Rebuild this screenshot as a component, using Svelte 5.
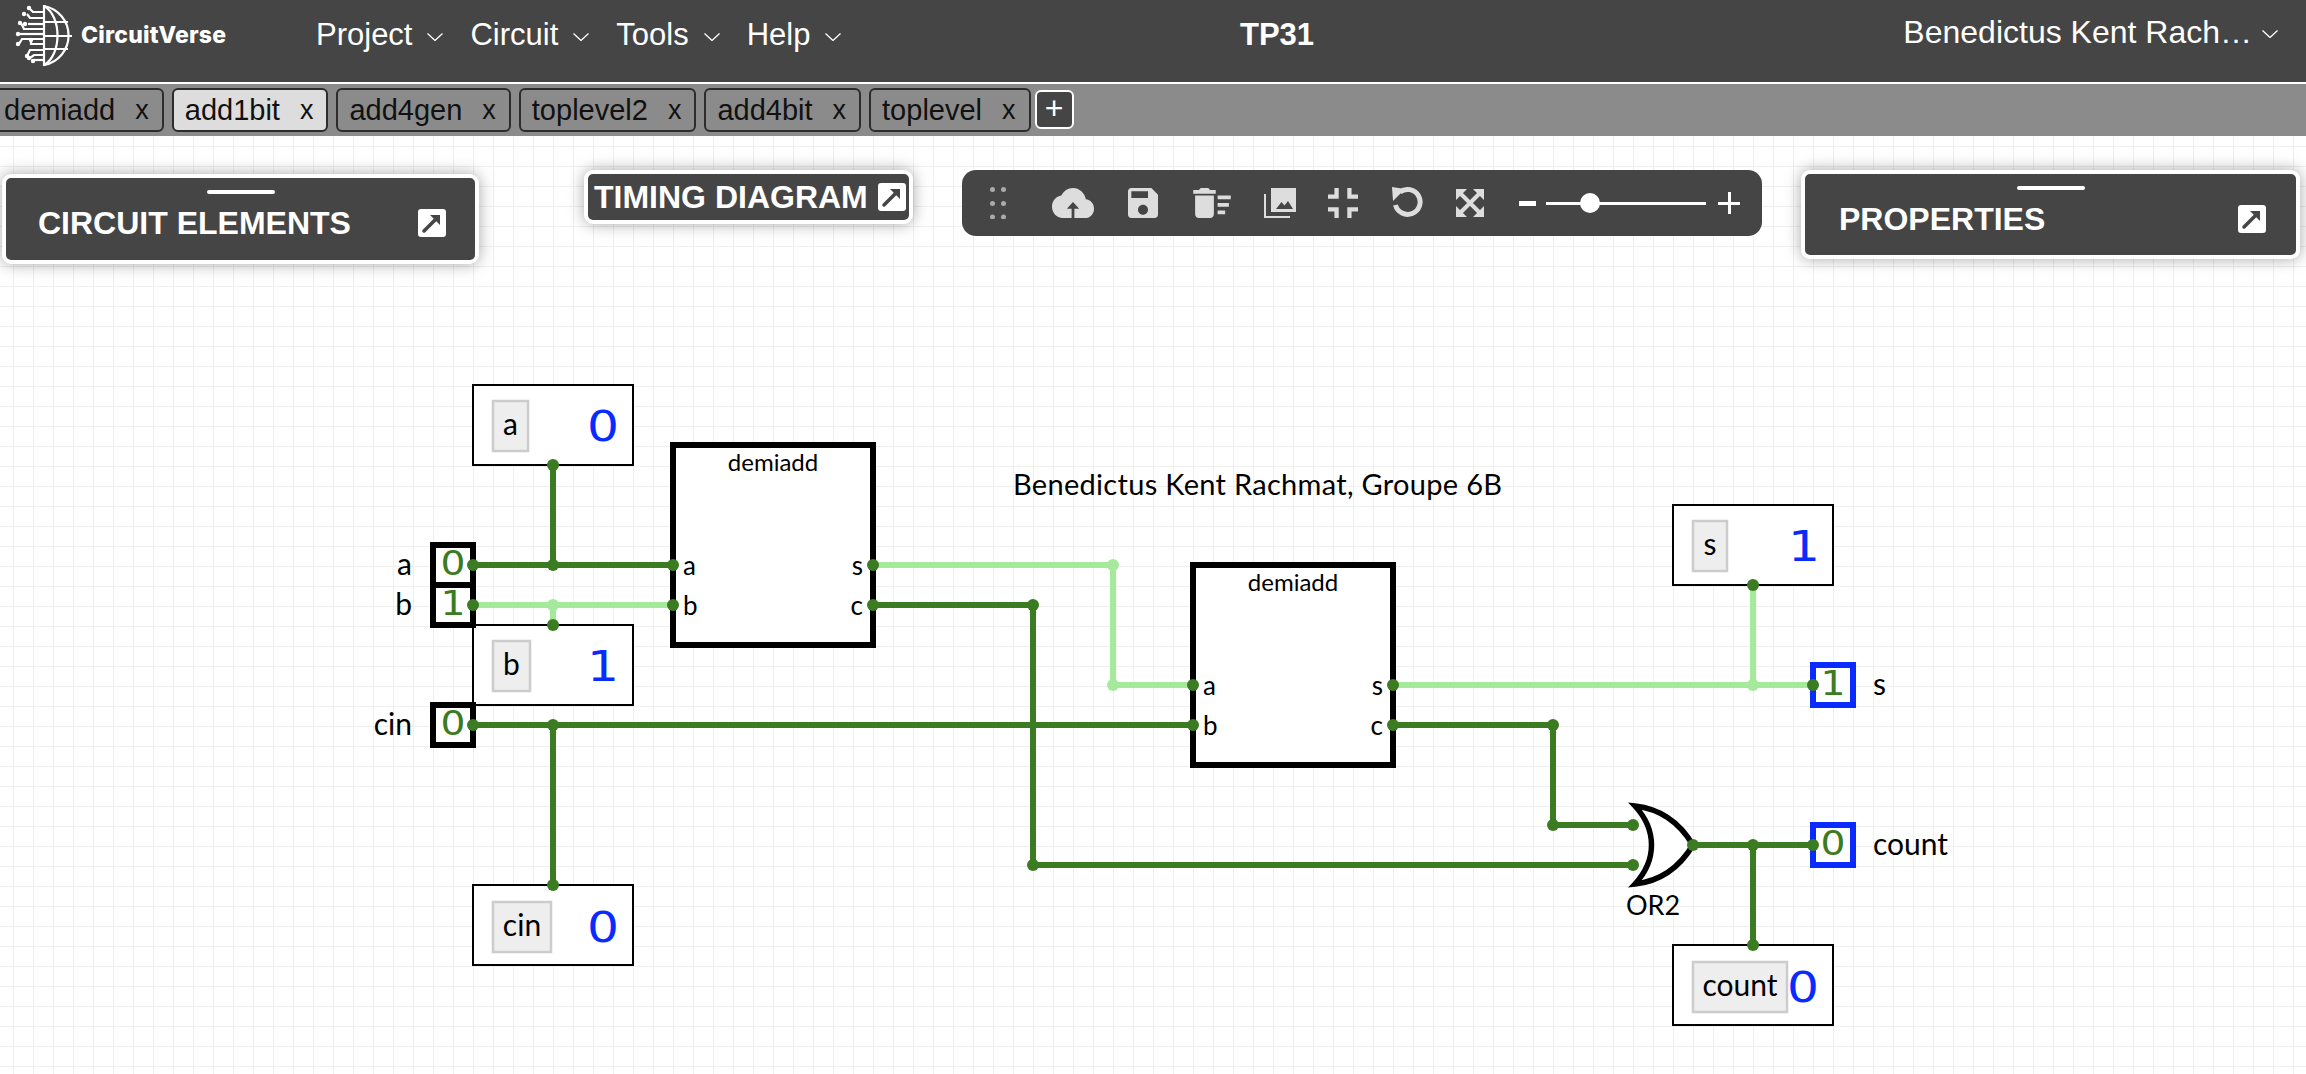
<script lang="ts">
  const NAV = ['Project', 'Circuit', 'Tools', 'Help'];
  const TABS = ['demiadd', 'add1bit', 'add4gen', 'toplevel2', 'add4bit', 'toplevel'];
  const ACTIVE_TAB = 'add1bit';

  const DARK = '#3b7c23';
  const LIGHT = '#a5ea9b';

  // wires: list of polylines in page coordinates
  const wires = [
    { c: DARK, p: '473,565 673,565' },
    { c: DARK, p: '553,465 553,565' },
    { c: LIGHT, p: '473,605 673,605' },
    { c: LIGHT, p: '553,605 553,625' },
    { c: DARK, p: '473,725 1193,725' },
    { c: DARK, p: '553,725 553,885' },
    { c: LIGHT, p: '873,565 1113,565 1113,685 1193,685' },
    { c: DARK, p: '873,605 1033,605 1033,865 1633,865' },
    { c: DARK, p: '1393,725 1553,725 1553,825 1633,825' },
    { c: LIGHT, p: '1393,685 1813,685' },
    { c: LIGHT, p: '1753,685 1753,585' },
    { c: DARK, p: '1693,845 1813,845' },
    { c: DARK, p: '1753,845 1753,945' },
  ];

  const nodes = [
    [473, 565, DARK], [473, 605, DARK], [473, 725, DARK],
    [553, 465, DARK], [553, 565, DARK], [553, 605, LIGHT], [553, 625, DARK],
    [553, 725, DARK], [553, 885, DARK],
    [673, 565, DARK], [673, 605, DARK], [873, 565, DARK], [873, 605, DARK],
    [1113, 565, LIGHT], [1113, 685, LIGHT], [1033, 605, DARK], [1033, 865, DARK],
    [1193, 685, DARK], [1193, 725, DARK], [1393, 685, DARK], [1393, 725, DARK],
    [1553, 725, DARK], [1553, 825, DARK], [1633, 825, DARK], [1633, 865, DARK],
    [1693, 845, DARK], [1753, 685, LIGHT], [1753, 585, DARK], [1753, 845, DARK],
    [1753, 945, DARK], [1813, 685, DARK], [1813, 845, DARK],
  ] as [number, number, string][];

  // probes on the canvas: the boxed labels with a blue value
  const probes = [
    { x: 473, y: 385, chipX: 492, chipW: 37, text: 'a', value: '0', vx: 603, base: 434 },
    { x: 473, y: 625, chipX: 492, chipW: 39, text: 'b', value: '1', vx: 603, base: 674 },
    { x: 473, y: 885, chipX: 492, chipW: 60, text: 'cin', value: '0', vx: 603, base: 935 },
    { x: 1673, y: 505, chipX: 1692, chipW: 36, text: 's', value: '1', vx: 1804, base: 554 },
    { x: 1673, y: 945, chipX: 1692, chipW: 96, text: 'count', value: '0', vx: 1803, base: 995 },
  ];

  const inputs = [
    { y: 545, name: 'a', value: '0' },
    { y: 585, name: 'b', value: '1' },
    { y: 705, name: 'cin', value: '0' },
  ];

  const outputs = [
    { y: 665, name: 's', value: '1' },
    { y: 825, name: 'count', value: '0' },
  ];

  const subcircuits = [
    { x: 673, y: 445 },
    { x: 1193, y: 565 },
  ];

  // logo circuit traces, in page pixels
  const traces = [
    'M44 12H33L29 8', 'M44 18H30L27 14', 'M44 24H28', 'M44 29H24L21 23', 'M44 34H19',
    'M44 39H22L19 44', 'M44 44H31V40', 'M44 50H30L27 56', 'M44 55H34L30 58', 'M44 60H34',
  ];
  const traceDots = [
    [29, 8], [24, 14], [25, 24], [20, 23], [18, 34], [18, 44], [31, 40], [27, 56], [29, 58], [33, 61],
  ];
</script>

{#snippet launch()}
  <svg class="launch" viewBox="0 0 28 28">
    <rect width="28" height="28" rx="3" fill="#fff" />
    <path d="M6 22L19 9" fill="none" stroke="#454545" stroke-width="3.5" stroke-linecap="round" />
    <path d="M12 6H22V16Z" fill="#454545" />
  </svg>
{/snippet}

{#snippet chevron()}
  <svg class="chevron" viewBox="0 0 16 8"><path d="M0.5 0.5L8 7.5L15.5 0.5" fill="none" stroke="#fff" stroke-width="1.3" /></svg>
{/snippet}

<div class="page">
  <header class="navbar">
    <div class="logo">
      <svg class="globe" viewBox="0 0 76 70" fill="none" stroke="#fff" stroke-width="2.2">
        <path d="M44 6A30 30 0 0 1 44 65" />
        <path d="M44 6C62 16 62 55 44 65" />
        <path d="M44 5V66M44 22H68M44 36H72M44 49H68" />
        {#each traces as t}<path d={t} />{/each}
        {#each traceDots as d}<circle cx={d[0]} cy={d[1]} r="2.2" fill="#fff" stroke="none" />{/each}
      </svg>
      <span class="brand">CircuitVerse</span>
    </div>
    <nav class="menu">
      {#each NAV as item}
        <span class="menu-item">{item}{@render chevron()}</span>
      {/each}
    </nav>
    <div class="project">TP31</div>
    <div class="user">Benedictus Kent Rach…{@render chevron()}</div>
  </header>

  <div class="tabs">
    {#each TABS as tab}
      <div class="tab" class:active={tab === ACTIVE_TAB}><span>{tab}</span><span class="close">x</span></div>
    {/each}
    <div class="add-tab">+</div>
  </div>

  <main class="canvas">
    <svg class="circuit" viewBox="0 136 2306 938">
      {#each wires as w}
        <polyline points={w.p} fill="none" stroke={w.c} stroke-width="6" />
      {/each}

      {#each subcircuits as s}
        <rect x={s.x} y={s.y} width="200" height="200" fill="#fff" stroke="#000" stroke-width="6" />
        <text class="ral sub-title" x={s.x + 100} y={s.y + 26} text-anchor="middle">demiadd</text>
        <text class="ral pin" x={s.x + 10} y={s.y + 130}>a</text>
        <text class="ral pin" x={s.x + 10} y={s.y + 170}>b</text>
        <text class="ral pin" x={s.x + 190} y={s.y + 130} text-anchor="end">s</text>
        <text class="ral pin" x={s.x + 190} y={s.y + 170} text-anchor="end">c</text>
      {/each}
      <path d="M1635 806C1662 809 1681 825 1693 845C1681 865 1662 881 1635 884C1657 860 1657 830 1635 806Z" fill="#fff" stroke="#000" stroke-width="5.5" />
      <text class="ral or" x="1626" y="915">OR2</text>

      {#each probes as p}
        <rect x={p.x} y={p.y} width="160" height="80" fill="#fff" stroke="#000" stroke-width="2" />
        <rect x={p.chipX + 1} y={p.base - 33} width={p.chipW - 2} height="50" fill="#eee" stroke="#ccc" stroke-width="2.5" />
        <text class="ral big" x={p.chipX + p.chipW / 2} y={p.base + 1} text-anchor="middle">{p.text}</text>
        <text class="digit blue" x={p.vx} y={p.base + 7} text-anchor="middle" textLength="32" lengthAdjust="spacingAndGlyphs">{p.value}</text>
      {/each}

      {#each inputs as i}
        <rect x="433" y={i.y} width="40" height="40" fill="#fff" stroke="#000" stroke-width="6" />
        <text class="ral big" x="412" y={i.y + 30} text-anchor="end">{i.name}</text>
        <text class="digit green" x="453" y={i.y + 30} text-anchor="middle" textLength="25" lengthAdjust="spacingAndGlyphs">{i.value}</text>
      {/each}

      {#each outputs as o}
        <rect x="1813" y={o.y} width="40" height="40" fill="#fff" stroke="#0a2bff" stroke-width="6" />
        <text class="ral big" x="1873" y={o.y + 30}>{o.name}</text>
        <text class="digit green" x="1833" y={o.y + 30} text-anchor="middle" textLength="25" lengthAdjust="spacingAndGlyphs">{o.value}</text>
      {/each}

      {#each nodes as n}
        <circle cx={n[0]} cy={n[1]} r="6" fill={n[2]} />
      {/each}

      <text class="ral note" x="1013" y="495">Benedictus Kent Rachmat, Groupe 6B</text>
    </svg>

    <section class="panel elements">
      <div class="grip"></div>
      <div class="panel-row"><span class="panel-title">CIRCUIT ELEMENTS</span>{@render launch()}</div>
    </section>

    <section class="panel timing">
      <span class="panel-title">TIMING DIAGRAM</span>{@render launch()}
    </section>

    <section class="panel properties">
      <div class="grip"></div>
      <div class="panel-row"><span class="panel-title">PROPERTIES</span>{@render launch()}</div>
    </section>

    <div class="toolbar">
      <svg class="dots" viewBox="0 0 16 32" fill="#aaa">
        <circle cx="2.5" cy="2.5" r="2.5" /><circle cx="13.5" cy="2.5" r="2.5" />
        <circle cx="2.5" cy="16.5" r="2.5" /><circle cx="13.5" cy="16.5" r="2.5" />
        <circle cx="2.5" cy="30" r="2.5" /><circle cx="13.5" cy="30" r="2.5" />
      </svg>
      <svg class="tool cloud" viewBox="0 4 24 16" preserveAspectRatio="none"><path d="M19.35 10.04C18.67 6.59 15.64 4 12 4 9.11 4 6.6 5.64 5.35 8.04 2.34 8.36 0 10.91 0 14c0 3.31 2.69 6 6 6h5.2v-5H8.5L12 11.5 15.5 15h-2.7v5H19c2.76 0 5-2.24 5-5 0-2.64-2.05-4.78-4.65-4.96z" /></svg>
      <svg class="tool save" viewBox="3 3 18 18"><path d="M17 3H5c-1.11 0-2 .9-2 2v14c0 1.1.89 2 2 2h14c1.1 0 2-.9 2-2V7l-4-4zm-5 16c-1.66 0-3-1.34-3-3s1.34-3 3-3 3 1.34 3 3-1.34 3-3 3zm3-10H5V5h10v4z" /></svg>
      <svg class="tool sweep" viewBox="2 4 20 16"><path d="M15 16h4v2h-4zm0-8h7v2h-7zm0 4h6v2h-6zM3 18c0 1.1.9 2 2 2h6c1.1 0 2-.9 2-2V8H3v10zM14 5h-3l-1-1H6L5 5H2v2h12z" /></svg>
      <svg class="tool photos" viewBox="0 0 32 30">
        <path d="M7 0H32V24H7ZM12 21H29L24 13L20.5 17.5L17.5 14Z" fill-rule="evenodd" />
        <path d="M0 6H2V28H26V30H0Z" />
      </svg>
      <svg class="tool compress" viewBox="5 5 14 14"><path d="M5 16h3v3h2v-5H5v2zm3-8H5v2h5V5H8v3zm6 11h2v-3h3v-2h-5v5zm2-11V5h-2v5h5V8h-3z" /></svg>
      <svg class="tool undo" viewBox="0 0 34 36">
        <path d="M10 7A12.5 12.5 0 1 1 5.5 20" fill="none" stroke="#ddd" stroke-width="5" />
        <path d="M2 2L15 4L3 16Z" />
      </svg>
      <svg class="tool expand" viewBox="0 0 28 28">
        <path d="M4 4L24 24M24 4L4 24" fill="none" stroke="#ddd" stroke-width="4" />
        <path d="M0 0H11L0 11ZM28 0V11L17 0ZM0 28V17L11 28ZM28 28H17L28 17Z" />
      </svg>
      <div class="zoom-minus"></div>
      <div class="slider"><div class="thumb"></div></div>
      <div class="zoom-plus"></div>
    </div>
  </main>
</div>

<style>
  :global(body) { margin: 0; font-family: "Liberation Sans", Arial, sans-serif; }

  .page { width: 2306px; height: 1074px; display: flex; flex-direction: column; overflow: hidden; }

  .navbar {
    height: 84px;
    box-sizing: border-box;
    flex-shrink: 0;
    background: #454545;
    border-bottom: 2px solid #fff;
    color: #fff;
    position: relative;
    display: flex;
    align-items: flex-start;
  }

  .logo { display: flex; align-items: flex-start; height: 70px; width: 316px; flex-shrink: 0; }
  .globe { width: 76px; height: 70px; }
  .brand { font-family: Inter, sans-serif; font-weight: 800; font-size: 23px; line-height: 28px; margin: 21px 0 0 5px; letter-spacing: 0.2px; }

  .menu { display: flex; gap: 27px; margin-top: 16px; }
  .menu-item { font-size: 31px; line-height: 38px; display: flex; align-items: center; gap: 15px; }
  .chevron { width: 16px; height: 8px; margin-top: 4px; }

  .project {
    position: absolute;
    left: 1240px;
    top: 16px;
    font-size: 31px;
    line-height: 38px;
    font-weight: 700;
  }

  .user {
    margin-left: auto;
    margin-right: 28px;
    margin-top: 13px;
    font-size: 32px;
    line-height: 38px;
    display: flex;
    align-items: center;
    gap: 10px;
  }

  .tabs {
    height: 52px;
    box-sizing: border-box;
    flex-shrink: 0;
    background: #8b8b8b;
    display: flex;
    align-items: flex-start;
    gap: 8px;
    padding-top: 4px;
    margin-left: -9px;
  }

  .tab {
    height: 44px;
    box-sizing: border-box;
    border: 2px solid #2c2c2c;
    border-radius: 6px;
    font-size: 29px;
    line-height: 40px;
    color: #111;
    padding: 0 13px 0 11px;
    display: flex;
    gap: 20px;
    background: #8b8b8b;
  }

  .tab.active { background: #ddd; }
  .close { font-size: 27px; }

  .add-tab {
    width: 39px;
    height: 39px;
    box-sizing: border-box;
    margin: 2px 0 0 -4px;
    background: #454545;
    border: 2px solid #fff;
    border-radius: 6px;
    color: #fff;
    font-size: 32px;
    line-height: 33px;
    text-align: center;
  }

  .canvas {
    flex: 1;
    position: relative;
    background-color: #fff;
    background-image:
      linear-gradient(#efefef 1.5px, transparent 1.5px),
      linear-gradient(90deg, #efefef 1.5px, transparent 1.5px);
    background-size: 20px 20px;
    background-position: 13px 10px;
  }

  .circuit { position: absolute; inset: 0; width: 100%; height: 100%; }

  .ral { font-family: Lato, "Open Sans", sans-serif; fill: #000; }
  .big { font-size: 30px; }
  .sub-title { font-size: 24px; }
  .pin { font-size: 26px; }
  .or { font-size: 27px; }
  .note { font-size: 29px; letter-spacing: 0.3px; }
  .digit { font-family: "DejaVu Sans", sans-serif; }
  .blue { fill: #0a2bff; font-size: 43px; }
  .green { fill: #3b7c23; font-size: 34px; }

  .panel {
    position: absolute;
    box-sizing: border-box;
    background: #454545;
    border: 4px solid #fff;
    border-radius: 9px;
    box-shadow: 0 0 16px rgba(0, 0, 0, 0.35);
    color: #fff;
  }

  .panel-title { font-size: 32px; font-weight: 700; line-height: 38px; }
  .launch { width: 28px; height: 28px; flex-shrink: 0; }

  .grip { width: 68px; height: 4px; background: #fff; border-radius: 2px; margin: 12px auto 0; }
  .panel-row { display: flex; justify-content: space-between; align-items: center; }

  .elements { left: 2px; top: 38px; width: 477px; height: 90px; }
  .elements .panel-row { padding: 10px 29px 0 32px; }
  .properties { left: 1801px; top: 34px; width: 499px; height: 89px; }
  .properties .panel-row { padding: 10px 30px 0 34px; }

  .timing {
    left: 584px;
    top: 34px;
    width: 329px;
    height: 54px;
    display: flex;
    align-items: center;
    gap: 10px;
    padding-left: 6px;
  }

  .toolbar {
    position: absolute;
    left: 962px;
    top: 34px;
    width: 800px;
    height: 66px;
    box-sizing: border-box;
    background: #454545;
    border-radius: 14px;
    display: flex;
    align-items: center;
    padding-left: 28px;
  }

  .dots { width: 16px; height: 32px; margin-right: 46px; }
  .tool { fill: #ddd; flex-shrink: 0; }
  .cloud { width: 42px; height: 30px; margin-right: 34px; }
  .save { width: 30px; height: 30px; margin-right: 34px; }
  .sweep { width: 40px; height: 30px; margin-right: 32px; }
  .photos { width: 32px; height: 30px; margin-right: 32px; }
  .compress { width: 30px; height: 30px; margin-right: 32px; }
  .undo { width: 34px; height: 36px; margin-right: 32px; }
  .expand { width: 28px; height: 28px; margin-right: 35px; }

  .zoom-minus { width: 17px; height: 5px; background: #fff; margin-right: 10px; flex-shrink: 0; }
  .slider { width: 160px; height: 3px; background: #fff; position: relative; flex-shrink: 0; margin-right: 12px; }
  .thumb { position: absolute; left: 34px; top: -9px; width: 20px; height: 20px; border-radius: 50%; background: #fff; }
  .zoom-plus {
    width: 22px;
    height: 22px;
    flex-shrink: 0;
    background:
      linear-gradient(#fff, #fff) center / 22px 3px no-repeat,
      linear-gradient(#fff, #fff) center / 3px 22px no-repeat;
  }
</style>
